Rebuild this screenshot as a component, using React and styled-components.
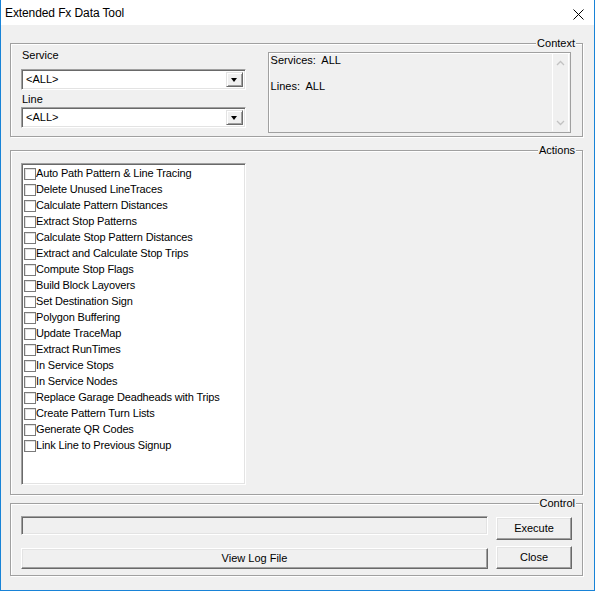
import React from "react";
import styled, { createGlobalStyle } from "styled-components";

const GlobalStyle = createGlobalStyle`
  html, body { margin: 0; padding: 0; background: #fff; }
  body {
    font-family: "Liberation Sans", Arial, sans-serif;
    font-size: 11px;
    color: #000;
  }
  * { box-sizing: border-box; }
`;

const Window = styled.div`
  width: 595px;
  height: 591px;
  border: 1px solid #1883d7;
  border-top: none;
  background: #f0f0f0;
  display: flex;
  flex-direction: column;
`;

const TitleBar = styled.div`
  height: 25px;
  background: #fff;
  display: flex;
  align-items: center;
  justify-content: space-between;
  padding: 1px 10px 0 4px;
  font-family: "Liberation Sans", Arial, sans-serif;
  font-size: 12px;
`;

const Title = styled.span`
  letter-spacing: -0.1px;
`;

const CloseIcon = styled.svg`
  width: 11px;
  height: 11px;
  display: block;
  margin-top: 2px;
`;

const Body = styled.div`
  flex: 1;
  display: flex;
  flex-direction: column;
  padding: 18px 10px 0 9px;
`;

const Group = styled.div`
  position: relative;
  width: 573px;
  height: ${(p) => p.$h}px;
  margin-top: ${(p) => p.$mt || 0}px;
  border: 1px solid #a0a0a0;
  box-shadow: inset 1px 1px 0 #fff, 1px 1px 0 #fff;
  padding: ${(p) => p.$pad};
`;

const Legend = styled.span`
  position: absolute;
  top: -7px;
  right: 6px;
  padding: 0 1px;
  background: #f0f0f0;
  line-height: 13px;
`;

const ContextRow = styled.div`
  display: flex;
  align-items: flex-start;
`;

const LeftCol = styled.div`
  width: 225px;
  display: flex;
  flex-direction: column;
`;

const Label = styled.div`
  line-height: 13px;
  height: 13px;
  margin-top: ${(p) => p.$mt || 0}px;
  padding-left: 1px;
`;

const Combo = styled.div`
  margin-top: ${(p) => p.$mt || 0}px;
  height: 21px;
  display: flex;
  align-items: stretch;
  background: #fff;
  border: 1px solid;
  border-color: #a0a0a0 #fff #fff #a0a0a0;
  box-shadow: inset 1px 1px 0 #696969, inset -1px -1px 0 #e3e3e3;
  padding: 2px;
`;

const ComboText = styled.div`
  flex: 1;
  line-height: 15px;
  padding-left: 2px;
`;

const ComboButton = styled.div`
  width: 17px;
  background: #f0f0f0;
  border: 1px solid;
  border-color: #e3e3e3 #696969 #696969 #e3e3e3;
  box-shadow: inset 1px 1px 0 #fff, inset -1px -1px 0 #a0a0a0;
  display: flex;
  align-items: center;
  justify-content: center;
`;

const Arrow = styled.div`
  width: 0;
  height: 0;
  border-left: 3.5px solid transparent;
  border-right: 3.5px solid transparent;
  border-top: 4px solid #000;
  margin-top: 1px;
`;

const ContextBox = styled.div`
  margin-left: 22px;
  margin-top: 3px;
  width: 304px;
  height: 81px;
  border: 1px solid #a0a0a0;
  box-shadow: inset 1px 1px 0 #fff;
  display: flex;
  background: #f0f0f0;
`;

const ContextText = styled.div`
  flex: 1;
  padding: 1px 0 0 2px;
  line-height: 13px;
  white-space: pre;
`;

const ScrollTrack = styled.div`
  width: 17px;
  margin: 1px 1px 1px 0;
  border-left: 1px solid #fff;
  border-right: 1px solid #fff;
  display: flex;
  flex-direction: column;
  justify-content: space-between;
  align-items: center;
  padding: 6px 0 5px;
`;

const Chevron = styled.svg`
  width: 9px;
  height: 6px;
  display: block;
`;

const ListBox = styled.div`
  width: 225px;
  height: 322px;
  background: #fff;
  border: 1px solid;
  border-color: #a0a0a0 #fff #fff #a0a0a0;
  box-shadow: inset 1px 1px 0 #696969, inset -1px -1px 0 #e3e3e3;
  padding: 1px 0 0 2px;
`;

const Item = styled.div`
  height: 16px;
  display: flex;
  align-items: center;
  white-space: nowrap;
`;

const Check = styled.span`
  width: 12px;
  height: 12px;
  flex: none;
  margin: 1px 0 0 0;
  border: 1px solid #7a7a7a;
  box-shadow: inset 1px 1px 0 #e0e0e0;
  background: #fff;
`;

const ItemText = styled.span`
  letter-spacing: -0.15px;
`;

const ControlGrid = styled.div`
  display: grid;
  grid-template-columns: 467px 76px;
  grid-template-rows: 24px 23px;
  column-gap: 8px;
  row-gap: 6px;
  align-items: start;
`;

const Progress = styled.div`
  height: 19px;
  border: 1px solid;
  border-color: #a0a0a0 #fff #fff #a0a0a0;
  box-shadow: inset 1px 1px 0 #696969, inset -1px -1px 0 #e3e3e3;
  background: #f0f0f0;
`;

const Button = styled.div`
  height: ${(p) => p.$h}px;
  margin-top: ${(p) => p.$mt || 0}px;
  border: 1px solid;
  border-color: #fff #696969 #696969 #fff;
  box-shadow: inset -1px -1px 0 #a0a0a0, inset 1px 1px 0 #e3e3e3;
  background: #f0f0f0;
  display: flex;
  align-items: center;
  justify-content: center;
  line-height: 13px;
`;

const actions = [
  "Auto Path Pattern & Line Tracing",
  "Delete Unused LineTraces",
  "Calculate Pattern Distances",
  "Extract Stop Patterns",
  "Calculate Stop Pattern Distances",
  "Extract and Calculate Stop Trips",
  "Compute Stop Flags",
  "Build Block Layovers",
  "Set Destination Sign",
  "Polygon Buffering",
  "Update TraceMap",
  "Extract RunTimes",
  "In Service Stops",
  "In Service Nodes",
  "Replace Garage Deadheads with Trips",
  "Create Pattern Turn Lists",
  "Generate QR Codes",
  "Link Line to Previous Signup",
];

export default function App() {
  return (
    <>
      <GlobalStyle />
      <Window>
        <TitleBar>
          <Title>Extended Fx Data Tool</Title>
          <CloseIcon viewBox="0 0 11 11">
            <path d="M0.5 0.5 L10.5 10.5 M10.5 0.5 L0.5 10.5" stroke="#000" strokeWidth="1" />
          </CloseIcon>
        </TitleBar>
        <Body>
          <Group $h={94} $pad="5px 11px 0 10px">
            <Legend>Context</Legend>
            <ContextRow>
              <LeftCol>
                <Label>Service</Label>
                <Combo $mt={7}>
                  <ComboText>&lt;ALL&gt;</ComboText>
                  <ComboButton><Arrow /></ComboButton>
                </Combo>
                <Label $mt={3}>Line</Label>
                <Combo $mt={1}>
                  <ComboText>&lt;ALL&gt;</ComboText>
                  <ComboButton><Arrow /></ComboButton>
                </Combo>
              </LeftCol>
              <ContextBox>
                <ContextText>{"Services:  ALL\n\nLines:  ALL"}</ContextText>
                <ScrollTrack>
                  <Chevron viewBox="0 0 9 6">
                    <path d="M1 5 L4.5 1.5 L8 5" stroke="#c2c2c2" strokeWidth="1.3" fill="none" />
                  </Chevron>
                  <Chevron viewBox="0 0 9 6">
                    <path d="M1 1 L4.5 4.5 L8 1" stroke="#c2c2c2" strokeWidth="1.3" fill="none" />
                  </Chevron>
                </ScrollTrack>
              </ContextBox>
            </ContextRow>
          </Group>
          <Group $h={345} $mt={13} $pad="12px 0 0 10px">
            <Legend>Actions</Legend>
            <ListBox>
              {actions.map((a) => (
                <Item key={a}>
                  <Check />
                  <ItemText>{a}</ItemText>
                </Item>
              ))}
            </ListBox>
          </Group>
          <Group $h={73} $mt={8} $pad="12px 10px 0 10px">
            <Legend>Control</Legend>
            <ControlGrid>
              <Progress />
              <Button $h={23} $mt={1}>Execute</Button>
              <Button $h={21} $mt={2}>View Log File</Button>
              <Button $h={23}>Close</Button>
            </ControlGrid>
          </Group>
        </Body>
      </Window>
    </>
  );
}
